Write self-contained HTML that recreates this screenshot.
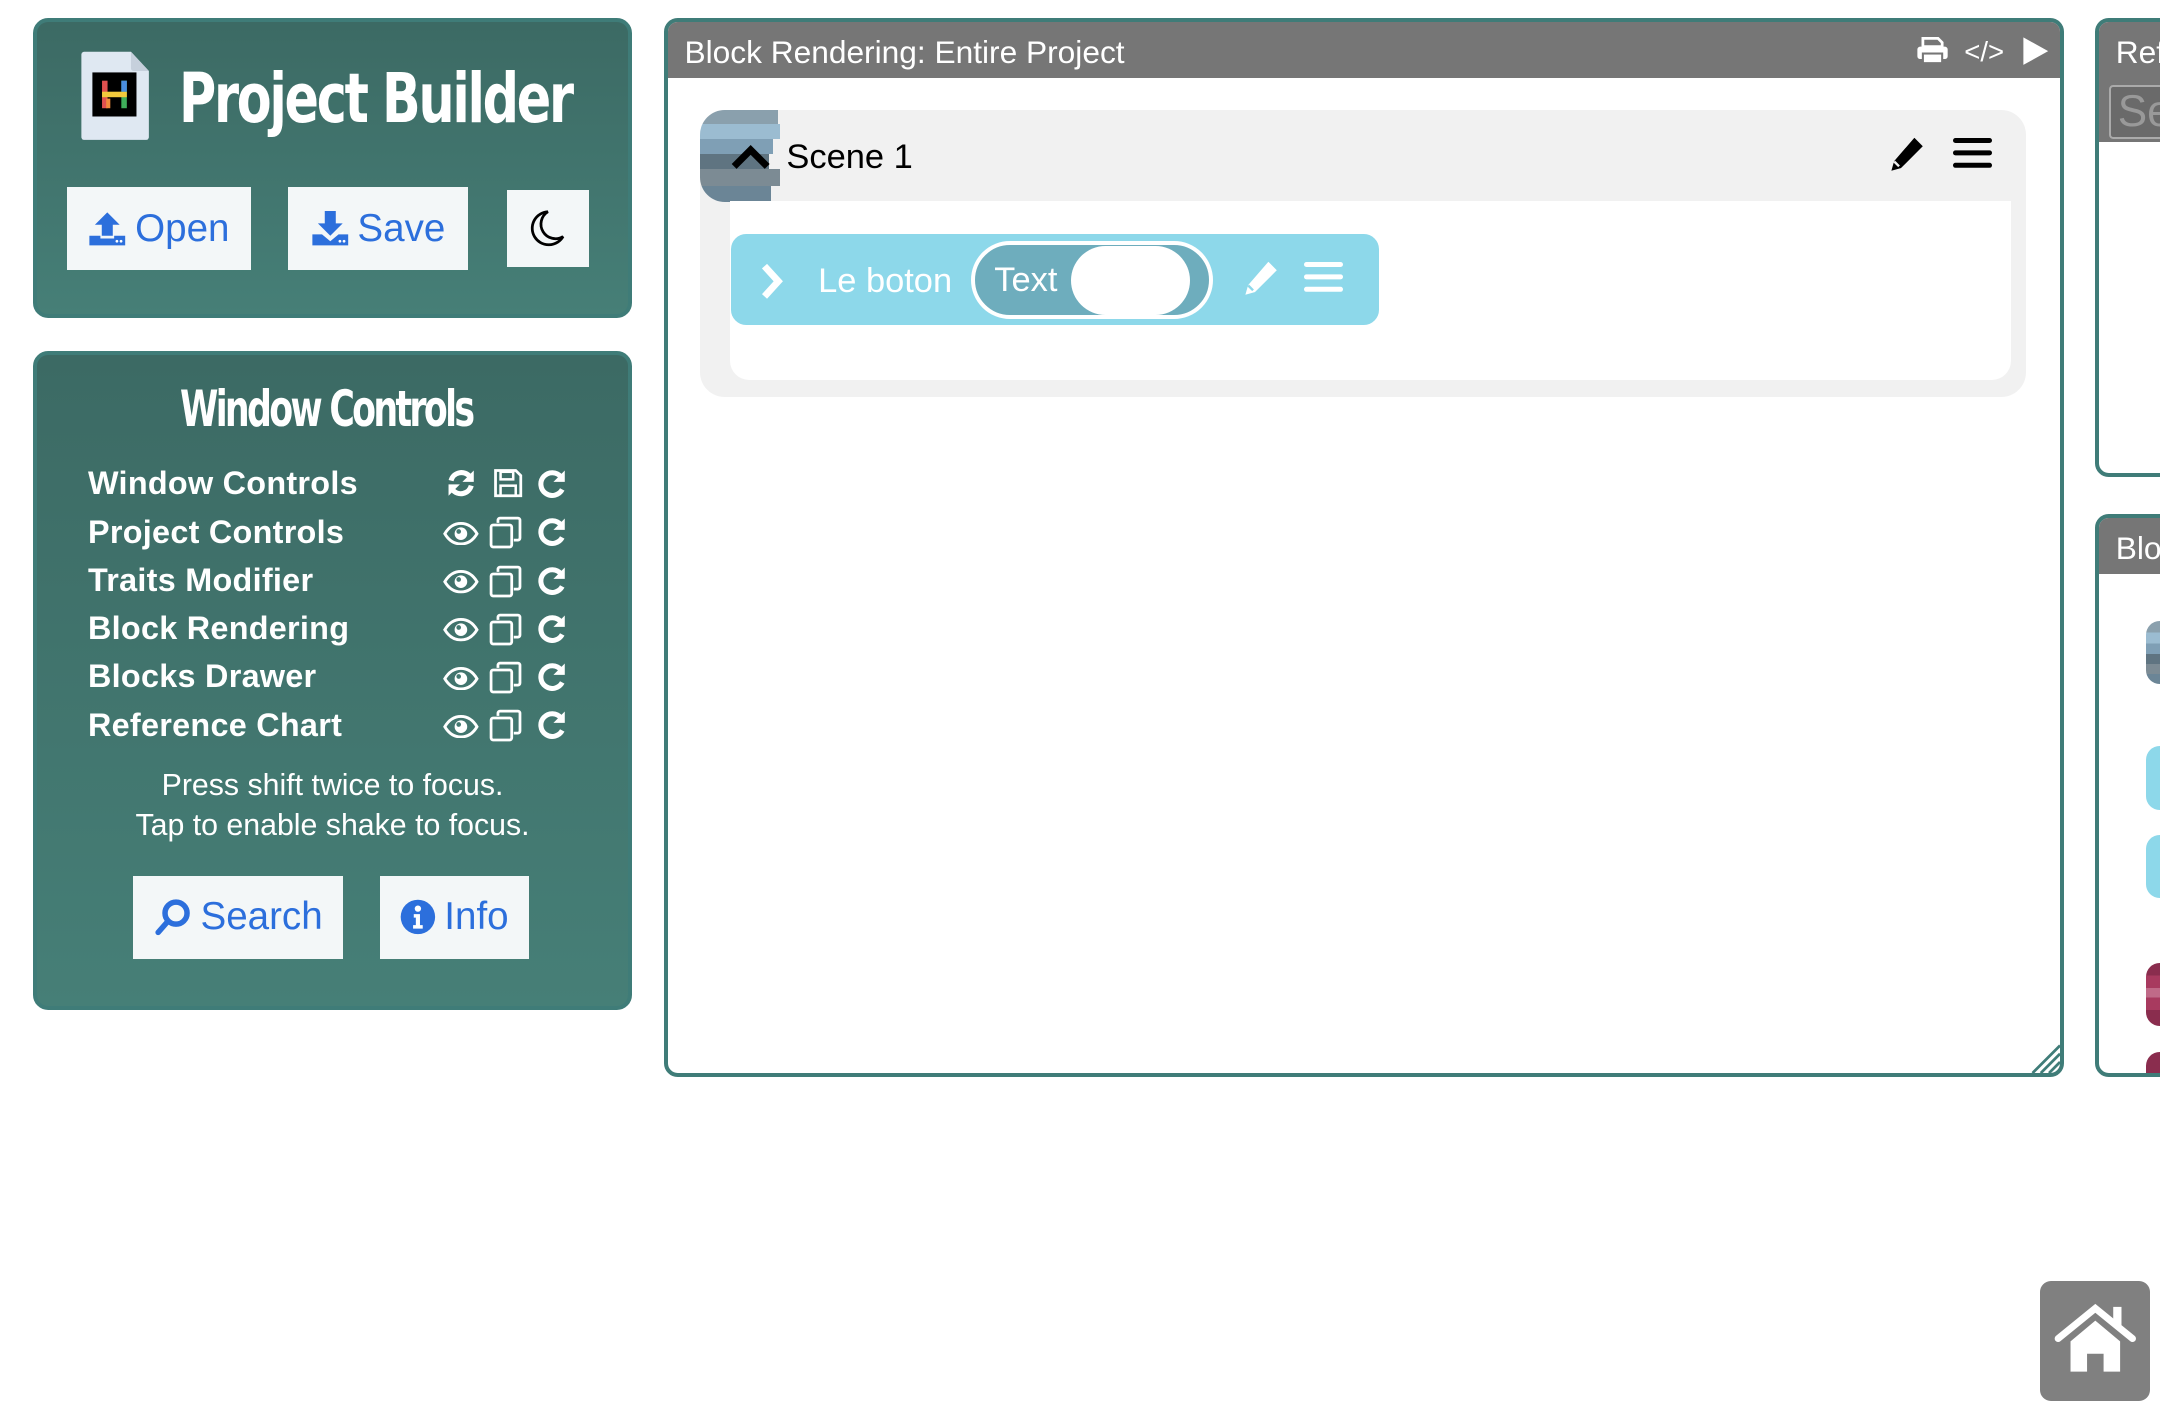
<!DOCTYPE html>
<html><head><meta charset="utf-8"><style>
html,body{margin:0;padding:0;background:#fff;overflow:hidden}
body{width:2160px;height:1409px;position:relative}
#root{zoom:1.377551;width:1568px;height:1023px;position:relative;font-family:"Liberation Sans",sans-serif}
.abs{position:absolute}
.panel{position:absolute;border:3px solid #3f7c78;border-radius:11px;background:linear-gradient(#3c6a64,#467f77);box-sizing:border-box}
.btn{position:absolute;background:#f3f7f8;color:#2c6fdc;font-size:28px;display:flex;align-items:center;justify-content:center;gap:6px;box-sizing:border-box}
.imp{font-family:"DejaVu Sans Condensed","DejaVu Sans",sans-serif;font-weight:bold;color:#fff;letter-spacing:-2px;transform:scaleX(0.82);transform-origin:left center;white-space:nowrap}
.row{position:absolute;left:37px;color:#fff;font-weight:bold;font-size:23.5px;letter-spacing:0.2px}
.ic{position:absolute}
.win{position:absolute;border:3px solid #3f7c78;border-radius:10px;background:#fff;box-sizing:border-box;overflow:hidden}
.hdr{position:absolute;left:0;top:0;right:0;height:40px;background:#767676;color:#fff;font-size:24px;line-height:40px;padding-left:12px}
</style></head><body><div id="root">

<svg width="0" height="0" style="position:absolute">
<defs>
<symbol id="eye" viewBox="0 0 24 16"><path d="M1 8C4 3 8 1 12 1s8 2 11 7c-3 5-7 7-11 7S4 13 1 8z" fill="none" stroke="#fff" stroke-width="2"/><circle cx="12" cy="8" r="4.3" fill="#fff"/><circle cx="10.5" cy="6.5" r="1.6" fill="#447a72"/></symbol>
<symbol id="copy" viewBox="0 0 24 24"><rect x="1.5" y="6.5" width="15" height="16" rx="1.5" fill="none" stroke="#fff" stroke-width="2"/><path d="M6.5 5V3a1.5 1.5 0 0 1 1.5-1.5h13a1.5 1.5 0 0 1 1.5 1.5v13a1.5 1.5 0 0 1-1.5 1.5H18" fill="none" stroke="#fff" stroke-width="2"/></symbol>
<symbol id="redo" viewBox="0 0 24 24"><path d="M19 7A9 9 0 1 0 20 17" fill="none" stroke="#fff" stroke-width="4"/><path d="M22 2v9h-9z" fill="#fff"/></symbol>
<symbol id="sync" viewBox="0 0 24 24"><path d="M4 10A8.5 8.5 0 0 1 19 7" fill="none" stroke="#fff" stroke-width="4"/><path d="M22 2v9h-9z" fill="#fff"/><path d="M20 14A8.5 8.5 0 0 1 5 17" fill="none" stroke="#fff" stroke-width="4"/><path d="M2 22v-9h9z" fill="#fff"/></symbol>
<symbol id="floppy" viewBox="0 0 24 24"><path d="M2 2h16l4 4v16H2z" fill="none" stroke="#fff" stroke-width="2.2"/><rect x="6" y="3" width="10" height="6" fill="none" stroke="#fff" stroke-width="2"/><rect x="6" y="14" width="12" height="8" fill="none" stroke="#fff" stroke-width="2"/></symbol>
<symbol id="pencil" viewBox="0 0 24 24"><path d="M17 1l6 6-14 14-7 2 2-7z"/><path d="M4.5 16.5l3 3" stroke-width="1.5"/></symbol>
</defs></svg>

<!-- Panel 1 -->
<div class="panel" style="left:24px;top:13px;width:435px;height:218px">
  <svg class="ic" style="left:31px;top:20px" width="52" height="68" viewBox="0 0 52 68"><path d="M3 2h34l13 14v48a2 2 0 0 1-2 2H3a2 2 0 0 1-2-2V4a2 2 0 0 1 2-2z" fill="#dfe8f2"/><path d="M37 2v12a2 2 0 0 0 2 2h11" fill="#c6d0dc"/><rect x="9" y="17" width="32" height="32" fill="#000"/><rect x="16" y="23" width="4" height="20" fill="#e0504f"/><rect x="30" y="23" width="4" height="20" fill="#3fae5a"/><rect x="16" y="31" width="18" height="4" fill="#f2c93c"/><rect x="19" y="36" width="3" height="7" fill="#f08a3c"/><rect x="30" y="23" width="4" height="8" fill="#4a8ee0"/></svg>
  <div class="abs imp" style="left:103px;top:24px;font-size:50px;line-height:64px">Project Builder</div>
  <div class="btn" style="left:22px;top:120px;width:133px;height:60px"><svg width="28" height="26" viewBox="0 0 28 26"><path d="M14 1l9 9h-5v8h-8v-8H5z" fill="#2c6fdc"/><path d="M1 18h8v2h10v-2h8v7H1z" fill="#2c6fdc"/><circle cx="21" cy="22" r="1" fill="#fff"/><circle cx="24" cy="22" r="1" fill="#fff"/></svg>Open</div>
  <div class="btn" style="left:182px;top:120px;width:131px;height:60px"><svg width="28" height="26" viewBox="0 0 28 26"><path d="M10 0h8v9h5l-9 9-9-9h5z" fill="#2c6fdc"/><path d="M1 17h7l6 5 6-5h7v8H1z" fill="#2c6fdc"/><circle cx="21" cy="22" r="1" fill="#fff"/><circle cx="24" cy="22" r="1" fill="#fff"/></svg>Save</div>
  <div class="btn" style="left:341px;top:122px;width:60px;height:56px"><svg width="26" height="28" viewBox="0 0 26 28"><path d="M13 2A12 12 0 1 0 24 20 10 10 0 0 1 13 2z" fill="none" stroke="#000" stroke-width="2"/></svg></div>
</div>

<!-- Panel 2 -->
<div class="panel" style="left:24px;top:255px;width:435px;height:478px">
  <div class="abs imp" style="left:104px;top:17px;font-size:36px;line-height:44px;letter-spacing:-2.5px;transform:scaleX(0.78)">Window Controls</div>
  <div class="row" style="top:80px">Window Controls</div>
  <div class="row" style="top:115px">Project Controls</div>
  <div class="row" style="top:150px">Traits Modifier</div>
  <div class="row" style="top:185px">Block Rendering</div>
  <div class="row" style="top:220px">Blocks Drawer</div>
  <div class="row" style="top:255px">Reference Chart</div>
  <svg class="ic" style="left:297px;top:82px" width="22" height="22"><use href="#sync"/></svg>
  <svg class="ic" style="left:331px;top:82px" width="22" height="22"><use href="#floppy"/></svg>
  <svg class="ic" style="left:363px;top:82px" width="22" height="22"><use href="#redo"/></svg>
  <svg class="ic" style="left:295px;top:121px" width="26" height="17"><use href="#eye"/></svg>
  <svg class="ic" style="left:328px;top:117px" width="24" height="24"><use href="#copy"/></svg>
  <svg class="ic" style="left:363px;top:117px" width="22" height="22"><use href="#redo"/></svg>
  <svg class="ic" style="left:295px;top:156px" width="26" height="17"><use href="#eye"/></svg>
  <svg class="ic" style="left:328px;top:152px" width="24" height="24"><use href="#copy"/></svg>
  <svg class="ic" style="left:363px;top:152px" width="22" height="22"><use href="#redo"/></svg>
  <svg class="ic" style="left:295px;top:191px" width="26" height="17"><use href="#eye"/></svg>
  <svg class="ic" style="left:328px;top:187px" width="24" height="24"><use href="#copy"/></svg>
  <svg class="ic" style="left:363px;top:187px" width="22" height="22"><use href="#redo"/></svg>
  <svg class="ic" style="left:295px;top:226px" width="26" height="17"><use href="#eye"/></svg>
  <svg class="ic" style="left:328px;top:222px" width="24" height="24"><use href="#copy"/></svg>
  <svg class="ic" style="left:363px;top:222px" width="22" height="22"><use href="#redo"/></svg>
  <svg class="ic" style="left:295px;top:261px" width="26" height="17"><use href="#eye"/></svg>
  <svg class="ic" style="left:328px;top:257px" width="24" height="24"><use href="#copy"/></svg>
  <svg class="ic" style="left:363px;top:257px" width="22" height="22"><use href="#redo"/></svg>
  <div class="abs" style="left:0;width:429px;top:298px;text-align:center;color:#fff;font-size:22px;line-height:29px">Press shift twice to focus.<br>Tap to enable shake to focus.</div>
  <div class="btn" style="left:70px;top:378px;width:152px;height:60px"><svg width="28" height="28" viewBox="0 0 28 28"><circle cx="16" cy="11" r="8" fill="none" stroke="#2c6fdc" stroke-width="4"/><path d="M10 17l-7 8" stroke="#2c6fdc" stroke-width="4" stroke-linecap="round"/></svg>Search</div>
  <div class="btn" style="left:249px;top:378px;width:108px;height:60px"><svg width="26" height="26" viewBox="0 0 26 26"><circle cx="13" cy="13" r="12.5" fill="#2c6fdc"/><circle cx="13" cy="7" r="2.3" fill="#fff"/><path d="M10 11h4.5v8h2v2.5h-7V19h2v-5.5H10z" fill="#fff"/></svg>Info</div>
</div>

<!-- Main window -->
<div class="win" style="left:482px;top:13px;width:1016px;height:769px">
  <div class="hdr" style="height:41px;line-height:44px;font-size:23px">Block Rendering: Entire Project</div>
  <svg class="ic" style="left:906px;top:11px" width="24" height="20" viewBox="0 0 24 20"><path d="M5 1h11l3 3v3H5z" fill="none" stroke="#fff" stroke-width="2"/><rect x="1" y="7" width="22" height="9" rx="2" fill="#fff"/><rect x="5" y="12" width="14" height="7" fill="#fff" stroke="#767676" stroke-width="1.5"/></svg>
  <div class="abs" style="left:941px;top:4px;color:#fff;font-size:20px;line-height:36px">&lt;/&gt;</div>
  <svg class="ic" style="left:983px;top:10px" width="20" height="22" viewBox="0 0 20 22"><path d="M1 1l18 10L1 21z" fill="#fff"/></svg>
  <svg class="ic" style="right:0;bottom:0" width="24" height="24" viewBox="0 0 24 24"><path d="M4 24L24 4M10 24L24 10M16 24L24 16" stroke="#3f7c78" stroke-width="2"/></svg>

  <div class="abs" style="left:23px;top:64px;width:963px;height:208px;background:#f1f1f1;border-radius:18px">
    <div class="abs" style="left:0;top:0;width:58px;height:67px;border-radius:18px 0 0 18px;overflow:hidden">
      <div style="height:10px;width:57px;background:#8aa0ad"></div>
      <div style="height:11px;width:58px;background:#9bbcd1"></div>
      <div style="height:11px;width:53px;background:#7f9fb5"></div>
      <div style="height:11px;width:50px;background:#5f7481"></div>
      <div style="height:12px;width:58px;background:#7c8b94"></div>
      <div style="height:12px;width:52px;background:#6b8596"></div>
    </div>
    <svg class="ic" style="left:22px;top:24px" width="30" height="20" viewBox="0 0 30 20"><path d="M3 17L15 5l12 12" fill="none" stroke="#000" stroke-width="5"/></svg>
    <div class="abs" style="left:63px;top:20px;font-size:25px;color:#000">Scene 1</div>
    <svg class="ic" style="left:862px;top:18px;fill:#000;stroke:#f1f1f1" width="28" height="28"><use href="#pencil"/></svg>
    <div class="abs" style="left:910px;top:20px;width:28px;height:4px;background:#000;border-radius:2px;box-shadow:0 9px 0 #000,0 18px 0 #000"></div>
    <div class="abs" style="left:22px;top:66px;width:930px;height:130px;background:#fff;border-radius:0 0 14px 14px"></div>
    <div class="abs" style="left:23px;top:90px;width:470px;height:66px;background:#8dd8ea;border-radius:11px">
      <svg class="ic" style="left:20px;top:20px" width="20" height="28" viewBox="0 0 20 28"><path d="M4 3l10 11L4 25" fill="none" stroke="#fff" stroke-width="5"/></svg>
      <div class="abs" style="left:63px;top:20px;font-size:25px;color:#fff">Le boton</div>
      <div class="abs" style="left:174px;top:5px;width:176px;height:57px;border:3px solid #fff;border-radius:30px;background:#6eadbd;box-sizing:border-box">
        <div class="abs" style="left:14px;top:12px;font-size:25px;color:#fff">Text</div>
        <div class="abs" style="left:70px;top:1px;width:86px;height:50px;border-radius:28px;background:#fff"></div>
      </div>
      <svg class="ic" style="left:370px;top:18px;fill:#fff;stroke:#8dd8ea" width="28" height="28"><use href="#pencil"/></svg>
      <div class="abs" style="left:416px;top:20px;width:28px;height:4px;background:#fff;border-radius:2px;box-shadow:0 9px 0 #fff,0 18px 0 #fff"></div>
    </div>
  </div>
</div>

<div class="win" style="left:1521px;top:13px;width:80px;height:333px">
  <div class="hdr" style="height:41px;line-height:44px;font-size:23px">Reference Chart</div>
  <div class="abs" style="left:0;top:41px;right:0;height:46px;background:#767676"></div>
  <div class="abs" style="left:7px;top:46px;width:80px;height:36px;border:2px solid #aaa;border-radius:3px;background:#6a6a6a;color:#999;font-size:32px;line-height:36px;padding-left:5px">Search</div>
</div>
<div class="win" style="left:1521px;top:373px;width:80px;height:409px">
  <div class="hdr" style="height:41px;line-height:44px;font-size:23px">Blocks Drawer</div>
  <div class="abs" style="left:34px;top:75px;width:60px;height:46px;border-radius:10px;overflow:hidden;background:linear-gradient(#8aa0ad 0 18%,#9bbcd1 18% 36%,#7f9fb5 36% 52%,#5f7481 52% 68%,#7c8b94 68% 84%,#6b8596 84%)"></div>
  <div class="abs" style="left:34px;top:166px;width:60px;height:46px;border-radius:10px;background:#8dd8ea"></div>
  <div class="abs" style="left:34px;top:230px;width:60px;height:46px;border-radius:10px;background:#8dd8ea"></div>
  <div class="abs" style="left:34px;top:323px;width:60px;height:46px;border-radius:10px;overflow:hidden;background:linear-gradient(#8a2d4e 0 20%,#a83a5f 20% 40%,#c06a88 40% 55%,#a83a5f 55% 75%,#8a2d4e 75%)"></div>
  <div class="abs" style="left:34px;top:388px;width:60px;height:46px;border-radius:10px;background:#8a2d4e"></div>
</div>

<div class="abs" style="left:1481px;top:930px;width:80px;height:87px;background:#808080;border-radius:8px">
  <svg class="ic" style="left:10px;top:14px" width="60" height="56" viewBox="0 0 60 56"><path d="M3 28L30 6l27 22" fill="none" stroke="#fff" stroke-width="5" stroke-linecap="round"/><rect x="43" y="5" width="6" height="14" fill="#fff"/><path d="M12 30L30 15l18 15v22H36V39h-12v13H12z" fill="#fff"/></svg>
</div>

</div></body></html>
